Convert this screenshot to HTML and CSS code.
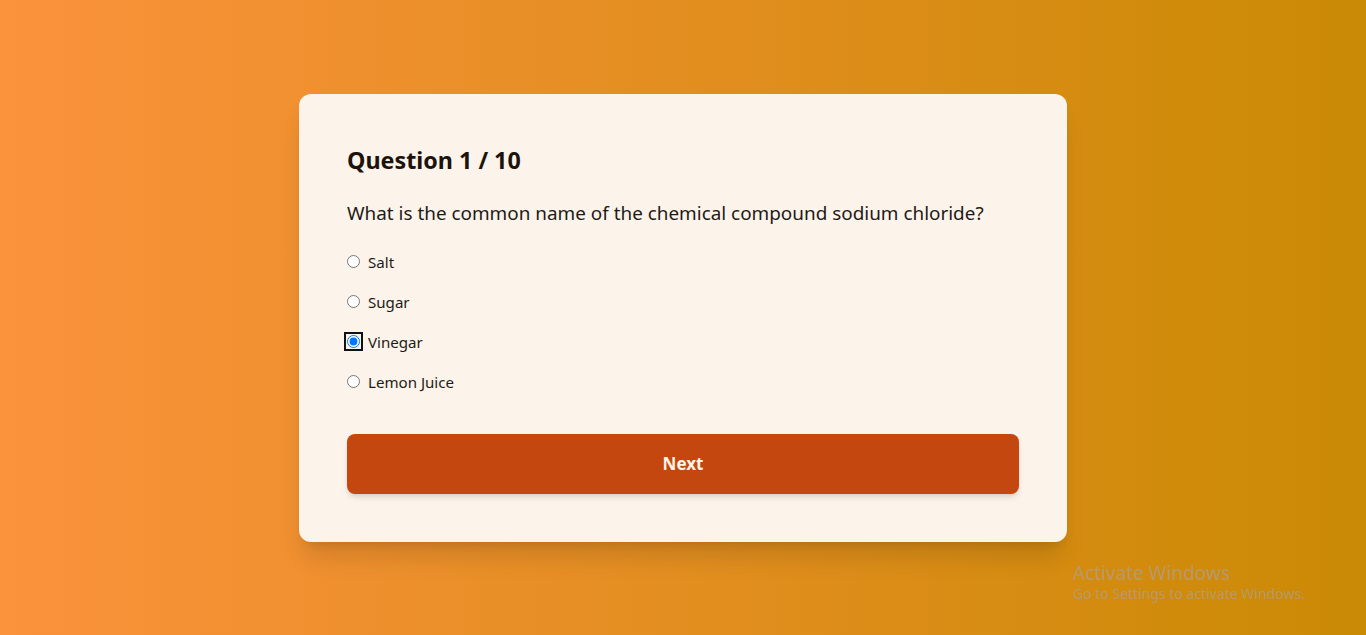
FILE: index.html
```html
<!DOCTYPE html>
<html lang="en">
<head>
<meta charset="utf-8">
<title>Quiz</title>
<link rel="stylesheet" href="styles.css">
</head>
<body>
<main class="page">
  <section class="card">
    <h2 class="card-title">Question 1 / 10</h2>
    <p class="question">What is the common name of the chemical compound sodium chloride?</p>
    <div class="options">
      <label class="option"><input type="radio" name="answer" class="radio"><span>Salt</span></label>
      <label class="option"><input type="radio" name="answer" class="radio"><span>Sugar</span></label>
      <label class="option"><input type="radio" name="answer" class="radio radio-focus" checked><span>Vinegar</span></label>
      <label class="option"><input type="radio" name="answer" class="radio"><span>Lemon Juice</span></label>
    </div>
    <button class="next-btn" type="button">Next</button>
  </section>
  <div class="watermark">
    <div class="wm-title">Activate Windows</div>
    <div class="wm-sub">Go to Settings to activate Windows.</div>
  </div>
</main>
</body>
</html>
```
FILE: styles.css
```css
* { box-sizing: border-box; }
html, body { margin: 0; padding: 0; }
body {
  font-family: "Noto Sans", "Open Sans", sans-serif;
  color: #1c1917;
}
.page {
  position: relative;
  min-height: 635px;
  height: 635px;
  display: flex;
  align-items: center;
  justify-content: center;
  background: linear-gradient(to right, #fb923c, #ca8a04);
  overflow: hidden;
}
.card {
  width: 768px;
  background: #fcf4ea;
  border-radius: 12px;
  padding: 48px;
  box-shadow: 0 20px 25px -5px rgba(0,0,0,0.12), 0 8px 10px -6px rgba(0,0,0,0.1);
}
.card-title {
  margin: 0;
  font-size: 23.3px;
  line-height: 36px;
  font-weight: 700;
  color: #1c130c;
}
.question {
  margin: 21px 0 0;
  font-size: 18.9px;
  line-height: 28px;
  color: #1f1a17;
}
.options {
  margin-top: 23px;
  display: flex;
  flex-direction: column;
  gap: 16px;
}
.option {
  display: flex;
  align-items: center;
  height: 24px;
  font-size: 15.1px;
  color: #1f1a17;
}
.radio {
  width: 13px;
  height: 13px;
  margin: 0 8px 0 0;
}
.radio-focus {
  outline: 2px solid #101010;
  outline-offset: 1px;
  border-radius: 2px;
}
.next-btn {
  margin-top: 40px;
  display: block;
  width: 100%;
  height: 60px;
  border: 0;
  border-radius: 8px;
  background: #c4470f;
  color: #fdf3e6;
  font-family: inherit;
  font-size: 17px;
  font-weight: 700;
  box-shadow: 0 4px 6px -1px rgba(0,0,0,0.12), 0 2px 4px -2px rgba(0,0,0,0.1);
}
.watermark {
  position: absolute;
  left: 1073px;
  top: 561px;
  color: rgba(170,160,150,0.7);
}
.wm-title {
  font-size: 19px;
  line-height: 24px;
}
.wm-sub {
  font-size: 14px;
  line-height: 18px;
}
```
